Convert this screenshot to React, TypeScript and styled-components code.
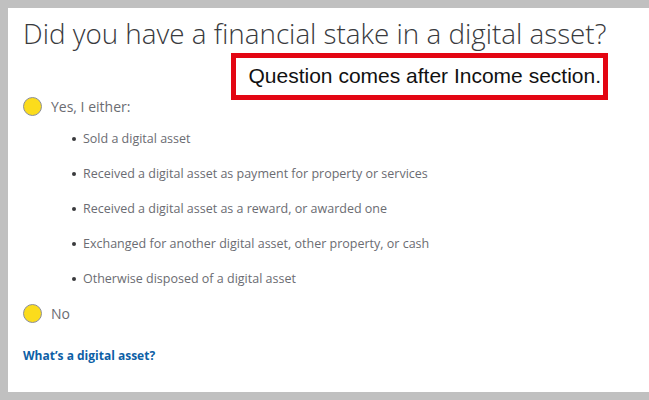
import React from "react";
import styled, { createGlobalStyle } from "styled-components";

const Global = createGlobalStyle`
  html, body { margin: 0; padding: 0; background: #c0c0c0; }
  body { width: 649px; height: 400px; overflow: hidden; }
`;

const Frame = styled.div`
  padding: 8px 0 8px 8px;
  height: 400px;
  box-sizing: border-box;
`;

const Panel = styled.main`
  background: #ffffff;
  height: 100%;
  box-sizing: border-box;
  padding: 8px 0 0 15px;
  display: flex;
  flex-direction: column;
`;

const Title = styled.h1`
  margin: 0;
  font-family: "Open Sans", sans-serif;
  font-weight: 300;
  font-size: 27.8px;
  line-height: 34px;
  color: #393a3d;
  white-space: nowrap;
`;

const NoteRow = styled.div`
  display: flex;
  justify-content: flex-end;
  padding-right: 41px;
  margin-top: 3px;
`;

const Note = styled.div`
  border: 5px solid #e30613;
  padding: 4px 2px 6px 13px;
  font-family: "Liberation Sans", Arial, sans-serif;
  font-size: 21px;
  line-height: 27px;
  color: #111111;
  white-space: nowrap;
`;

const Option = styled.label<{ $top: number }>`
  display: flex;
  align-items: center;
  gap: 9px;
  font-family: "Open Sans", sans-serif;
  font-size: 14px;
  color: #6b6c72;
  height: 20px;
  margin-top: ${(p) => p.$top}px;
`;

const Radio = styled.span`
  width: 17px;
  height: 17px;
  border-radius: 50%;
  background: #fbdc1c;
  border: 1px solid #8d9096;
  flex: none;
`;

const List = styled.ul`
  margin: 13px 0 0 0;
  padding: 0 0 0 49px;
  list-style: none;
  display: flex;
  flex-direction: column;
  gap: 15px;
`;

const Item = styled.li`
  font-family: "Open Sans", sans-serif;
  font-size: 12.5px;
  line-height: 20px;
  color: #6b6c72;
  display: flex;
  align-items: center;
  &::before {
    content: "";
    width: 4px;
    height: 4px;
    border-radius: 50%;
    background: #393a3d;
    margin-right: 7px;
  }
`;

const Link = styled.a`
  margin-top: 24px;
  align-self: flex-start;
  font-family: "Open Sans", sans-serif;
  font-weight: 700;
  font-size: 12px;
  color: #0d5fa6;
  text-decoration: none;
`;

const items = [
  "Sold a digital asset",
  "Received a digital asset as payment for property or services",
  "Received a digital asset as a reward, or awarded one",
  "Exchanged for another digital asset, other property, or cash",
  "Otherwise disposed of a digital asset",
];

export default function App() {
  return (
    <>
      <Global />
      <Frame>
        <Panel>
          <Title>Did you have a financial stake in a digital asset?</Title>
          <NoteRow>
            <Note>Question comes after Income section.</Note>
          </NoteRow>
          <Option $top={-4}>
            <Radio />
            Yes, I either:
          </Option>
          <List>
            {items.map((t) => (
              <Item key={t}>{t}</Item>
            ))}
          </List>
          <Option $top={14}>
            <Radio />
            No
          </Option>
          <Link href="#">What’s a digital asset?</Link>
        </Panel>
      </Frame>
    </>
  );
}
